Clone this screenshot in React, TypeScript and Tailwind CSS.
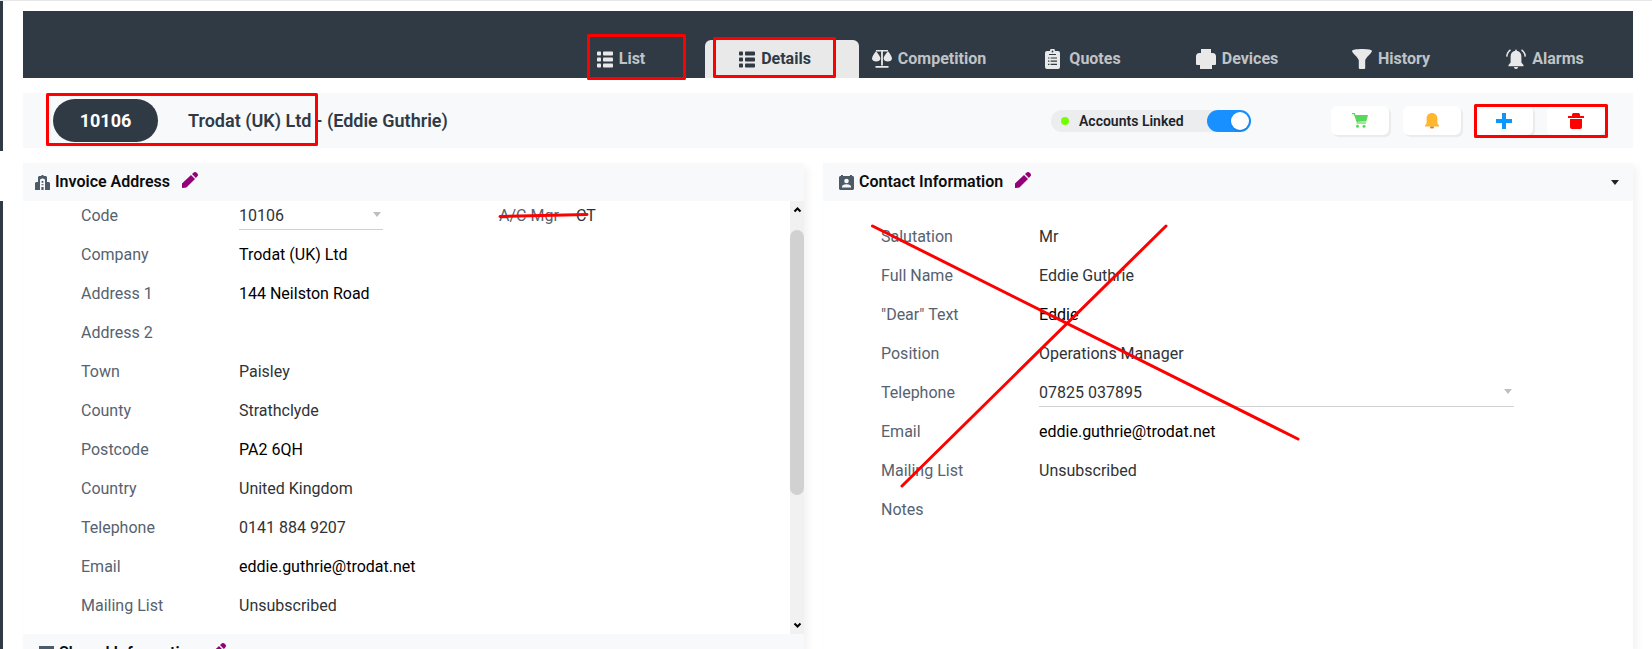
import React from "react";

type IconProps = { className?: string };

const ListIcon = ({ className }: IconProps) => (
  <svg viewBox="0 0 16 17" className={className} fill="currentColor">
    <rect x="0" y="0.500" width="4" height="4" rx="0.800" />
    <rect x="0" y="6.500" width="4" height="4" rx="0.800" />
    <rect x="0" y="12.500" width="4" height="4" rx="0.800" />
    <rect x="6" y="0.500" width="10" height="4" rx="0.800" />
    <rect x="6" y="6.500" width="10" height="4" rx="0.800" />
    <rect x="6" y="12.500" width="10" height="4" rx="0.800" />
  </svg>
);

const ScaleIcon = ({ className }: IconProps) => (
  <svg viewBox="0 0 20 18" className={className} fill="currentColor">
    <path d="M4 0h12v1.600H4zM9.100 1h1.800v14.500H9.100zM3.500 16h13v1.800h-13z" />
    <path d="M4 1.200C5.500 3 8.400 6 8.400 8.600 8.400 10.600 6.400 11.600 4.200 11.600S0 10.600 0 8.600C0 6 2.600 3 4 1.200zM16 1.200C17.400 3 20 6 20 8.600c0 2-2 3-4.200 3s-4.200-1-4.200-3C11.600 6 14.500 3 16 1.200z" />
  </svg>
);

const ClipboardIcon = ({ className }: IconProps) => (
  <svg viewBox="0 0 15 20" className={className}>
    <path fill="currentColor" d="M2 2h3a2.500 2.500 0 0 1 5 0h3a2 2 0 0 1 2 2v14a2 2 0 0 1-2 2H2a2 2 0 0 1-2-2V4a2 2 0 0 1 2-2z" />
    <circle cx="7.500" cy="2.500" r="0.900" fill="#303a45" />
    <path stroke="#303a45" strokeWidth="1.200" d="M4 5.500h7M3 9h1.400M5.600 9H12M3 12.200h1.400M5.600 12.200H12M3 15.400h1.400M5.600 15.400H12" />
  </svg>
);

const PrinterIcon = ({ className }: IconProps) => (
  <svg viewBox="0 0 20 20" className={className} fill="currentColor">
    <path d="M5 0h10v4h1.500A3.500 3.500 0 0 1 20 7.500V15a1 1 0 0 1-1 1h-3v4H4v-4H1a1 1 0 0 1-1-1V7.500A3.500 3.500 0 0 1 3.500 4H5z" />
  </svg>
);

const FunnelIcon = ({ className }: IconProps) => (
  <svg viewBox="0 0 20 20" className={className} fill="currentColor">
    <path d="M0 2C0 .7 4.500 0 10 0s10 .7 10 2c0 1.800-6.800 7-6.800 9.500V19a1 1 0 0 1-1 1H7.800a1 1 0 0 1-1-1v-7.500C6.800 9 0 3.800 0 2z" />
  </svg>
);

const RingingIcon = ({ className }: IconProps) => (
  <svg viewBox="0 0 20 20" className={className} fill="currentColor">
    <path d="M9.200 1.200a.8.8 0 0 1 1.600 0v.6C14 2.300 15.400 4.800 15.400 7.800V13.500l2.100 2.500v1.200h-15V16l2.100-2.500V7.800c0-3 1.400-5.500 4.600-6zM8 18h4a2 2 0 0 1-4 0z" />
    <path fill="none" stroke="currentColor" strokeWidth="1.500" d="M4.500.8C2.200 2.400.9 4.800.8 7.600M15.500.8c2.300 1.600 3.600 4 3.700 6.800" />
  </svg>
);

const CartIcon = ({ className }: IconProps) => (
  <svg viewBox="0 0 16 15" className={className}>
    <path fill="#58d858" d="M3.500 2H16l-1.600 6L5 9z" />
    <path fill="#9ee89a" d="M5 9l9.400-1-.6 3H5.600l-1.200 1z" />
    <path fill="none" stroke="#58d858" strokeWidth="1.300" d="M0 .7h2.400l3 8.500" />
    <circle cx="5.500" cy="13.300" r="1.500" fill="#58d858" />
    <circle cx="12" cy="13.300" r="1.500" fill="#58d858" />
  </svg>
);

const BellIcon = ({ className }: IconProps) => (
  <svg viewBox="0 0 14 16" className={className}>
    <path fill="#ffb72d" d="M7 0c3.400 0 5.400 2.400 5.400 5.600v4.600L14 12.400v1H0v-1l1.600-2.200V5.600C1.600 2.400 3.600 0 7 0z" />
    <path fill="#c98a2b" d="M4.800 13.400h4.400a2.200 2.200 0 0 1-4.400 0z" />
  </svg>
);

const PlusIcon = ({ className }: IconProps) => (
  <svg viewBox="0 0 16 16" className={className}>
    <path fill="#0a98ff" d="M6 0h4v6h6v4h-6v6H6v-6H0V6h6z" />
  </svg>
);

const TrashIcon = ({ className }: IconProps) => (
  <svg viewBox="0 0 16 16" className={className}>
    <path fill="#ff0000" d="M5.500 0h5A1.500 1.500 0 0 1 12 1.500V3h4v2H0V3h4V1.500A1.500 1.500 0 0 1 5.500 0zM2 6h12v8a2 2 0 0 1-2 2H4a2 2 0 0 1-2-2z" />
  </svg>
);

const PencilIcon = ({ className }: IconProps) => (
  <svg viewBox="0 0 16 16" className={className} fill="currentColor">
    <path d="M0 11.400L9 3l4 4-8.600 8.600L.6 16a.6.6 0 0 1-.6-.6zM10 2.100L11.700.6a2 2 0 0 1 2.700 0l1 1a2 2 0 0 1 0 2.700L13.900 6z" />
  </svg>
);

const BuildingIcon = ({ className }: IconProps) => (
  <svg viewBox="0 0 15 15" className={className}>
    <path fill="#4d5a68" d="M6.500 0h2v1H11l1 1v5h2l1 1v7H0V8l1-1h2V2l1-1h2.500z" />
    <path fill="#f8f9fb" d="M5 4.500l2.500-1.300L10 4.500V15H8.600v-3H6.400v3H5z" />
    <path fill="#4d5a68" d="M6.600 6h1.800v1.800H6.600zM6.400 9.300h2.200v1H6.400z" />
  </svg>
);

const ContactIcon = ({ className }: IconProps) => (
  <svg viewBox="0 0 15 15" className={className}>
    <path fill="#4d5a68" d="M2 0h2v1h7V0h2v1h1l1 1v12l-1 1H1l-1-1V2l1-1h1z" />
    <circle cx="7.500" cy="6" r="2.300" fill="#f8f9fb" />
    <path fill="#f8f9fb" d="M3 12.500v-1c0-1.500 3-2.300 4.500-2.300s4.500.8 4.500 2.300v1z" />
  </svg>
);

const BoxIcon = ({ className }: IconProps) => (
  <svg viewBox="0 0 15 15" className={className}>
    <rect width="15" height="15" fill="#4d5a68" />
  </svg>
);

const Caret = ({ className }: IconProps) => (
  <svg viewBox="0 0 8 5" className={className} fill="currentColor">
    <path d="M0 0h8L4 5z" />
  </svg>
);

const tabs = [
  { label: "List", Icon: ListIcon, size: "h-[17px] w-4" },
  { label: "Details", Icon: ListIcon, size: "h-[17px] w-4", active: true },
  { label: "Competition", Icon: ScaleIcon, size: "h-[18px] w-5" },
  { label: "Quotes", Icon: ClipboardIcon, size: "h-5 w-[15px] mr-[3px]" },
  { label: "Devices", Icon: PrinterIcon, size: "size-5" },
  { label: "History", Icon: FunnelIcon, size: "size-5" },
  { label: "Alarms", Icon: RingingIcon, size: "size-5" },
];

const actions = [
  { label: "Basket", icon: <CartIcon className="h-[15px] w-4" /> },
  { label: "Reminders", icon: <BellIcon className="h-4 w-[14px]" /> },
  { label: "Add", icon: <PlusIcon className="size-4" /> },
  { label: "Delete", icon: <TrashIcon className="size-4" /> },
];

type Field = { label: string; value?: string; strong?: boolean; select?: string; extra?: [string, string] };

const invoice: Field[] = [
  { label: "Code", value: "10106", select: "w-36", extra: ["A/C Mgr", "CT"] },
  { label: "Company", value: "Trodat (UK) Ltd", strong: true },
  { label: "Address 1", value: "144 Neilston Road", strong: true },
  { label: "Address 2" },
  { label: "Town", value: "Paisley" },
  { label: "County", value: "Strathclyde" },
  { label: "Postcode", value: "PA2 6QH", strong: true },
  { label: "Country", value: "United Kingdom" },
  { label: "Telephone", value: "0141 884 9207" },
  { label: "Email", value: "eddie.guthrie@trodat.net", strong: true },
  { label: "Mailing List", value: "Unsubscribed" },
];

const contact: Field[] = [
  { label: "Salutation", value: "Mr" },
  { label: "Full Name", value: "Eddie Guthrie" },
  { label: '"Dear" Text', value: "Eddie", strong: true },
  { label: "Position", value: "Operations Manager" },
  { label: "Telephone", value: "07825 037895", select: "mr-[119px] flex-1" },
  { label: "Email", value: "eddie.guthrie@trodat.net", strong: true },
  { label: "Mailing List", value: "Unsubscribed" },
  { label: "Notes" },
];

function FieldRow({ field, group }: { field: Field; group: string }) {
  const id = `${group}-${field.label}`;
  return (
    <div className="flex h-[39px] items-center pl-[58px]">
      {field.select ? (
        <>
          <label htmlFor={id} className="w-[158px] shrink-0 text-[#56626f]">{field.label}</label>
          <div className={`relative ${field.select}`}>
            <select id={id} className="h-7 w-full appearance-none border-b border-[#d0d0d0] bg-transparent pt-[2px] text-[#303336]">
              <option>{field.value}</option>
            </select>
            <Caret className="pointer-events-none absolute top-[10px] right-[2px] h-[5px] w-2 text-[#bfbfbf]" />
          </div>
        </>
      ) : (
        <>
          <span className="w-[158px] shrink-0 text-[#56626f]">{field.label}</span>
          <span className={field.strong ? "text-black" : "text-[#303336]"}>{field.value}</span>
        </>
      )}
      {field.extra && (
        <div className="ml-[116px] flex">
          <span className="w-[77px] text-[#56626f]">{field.extra[0]}</span>
          <span className="text-[#303336]">{field.extra[1]}</span>
        </div>
      )}
    </div>
  );
}

function CardHeader({ icon, title, children }: { icon: React.ReactNode; title: string; children?: React.ReactNode }) {
  return (
    <header className="flex h-[38px] shrink-0 items-center bg-[#f8f9fb] px-3">
      {icon}
      <h2 className="ml-[5px] text-base font-semibold text-[#0c0d0e]">{title}</h2>
      <button aria-label={`Edit ${title}`} className="mb-1 ml-3 text-[#940078]">
        <PencilIcon className="size-4" />
      </button>
      {children}
    </header>
  );
}

export default function App() {
  return (
    <div className="relative flex h-screen overflow-hidden border-t border-[#e8e8e8] bg-white font-['Roboto','Liberation_Sans',sans-serif] text-base leading-6">
      <aside className="flex w-[3px] shrink-0 flex-col">
        <div className="h-[150px] bg-[#303a45]" />
        <div className="mt-[50px] flex-1 bg-[#303a45]" />
      </aside>

      <main className="flex min-w-0 flex-1 flex-col gap-[15px] pt-[10px] pr-[19px] pl-5">
        <nav className="flex h-[67px] shrink-0 items-end justify-end bg-[#303a45] pr-1">
          {tabs.map(({ label, Icon, size, active }) => (
            <a
              key={label}
              href={`#${label.toLowerCase()}`}
              className={`flex h-[38px] w-[154px] items-center justify-center gap-[6px] rounded-t-md pr-[14px] text-base font-bold ${
                active ? "bg-[#e9e9e9] text-[#303a45]" : "text-[#c0c3c6]"
              }`}
            >
              <Icon className={`shrink-0 ${size} ${active ? "text-[#303a45]" : "text-[#e9e9e9]"}`} />
              {label}
            </a>
          ))}
        </nav>

        <section className="flex h-[55px] shrink-0 items-center bg-[#f8f9fb] pr-7 pl-[30px]">
          <span className="flex h-[43px] w-[105px] items-center justify-center rounded-full bg-[#303a45] text-lg font-bold text-white">10106</span>
          <h1 className="ml-[30px] text-lg font-semibold text-[#303a45]">Trodat (UK) Ltd - (Eddie Guthrie)</h1>

          <label className="ml-auto flex h-[22px] items-center rounded-full bg-[#ecedef] pl-[10px]">
            <span className="size-2 rounded-full bg-[#76ff03]" />
            <span className="ml-[10px] w-32 text-sm font-semibold text-[#202428]">Accounts Linked</span>
            <span className="relative flex">
              <input
                type="checkbox"
                defaultChecked
                className="h-[22px] w-11 appearance-none rounded-full bg-[#bfbfbf] checked:bg-[#1890ff]"
              />
              <span className="pointer-events-none absolute top-[2px] right-[2px] size-[18px] rounded-full bg-white shadow-sm" />
            </span>
          </label>

          <div className="ml-20 flex gap-[14px]">
            {actions.map(({ label, icon }) => (
              <button
                key={label}
                aria-label={label}
                className="flex h-[29px] w-[58px] items-center justify-center rounded-md bg-white shadow-[2px_2px_1px_rgba(0,0,0,0.06)]"
              >
                {icon}
              </button>
            ))}
          </div>
        </section>

        <div className="flex min-h-0 flex-1 gap-[19px]">
          <div className="flex min-w-0 flex-[781] flex-col shadow-[4px_4px_8px_rgba(0,0,0,0.05)]">
            <CardHeader icon={<BuildingIcon className="size-[15px]" />} title="Invoice Address" />
            <div className="flex h-[433px] shrink-0 overflow-hidden">
              <div className="-mt-[5px] min-w-0 flex-1">
                {invoice.map((field) => (
                  <FieldRow key={field.label} field={field} group="invoice" />
                ))}
              </div>
              <div className="flex w-[14px] shrink-0 flex-col items-center bg-[#f1f1f1]">
                <svg viewBox="0 0 14 17" className="h-[17px] w-[14px] shrink-0" fill="none" stroke="#000" strokeWidth="2">
                  <path d="M4.500 10.500l3-3 3 3" />
                </svg>
                <div className="mt-3 h-[265px] w-full rounded-full bg-[#d1d1d1]" />
                <svg viewBox="0 0 14 17" className="mt-auto h-[17px] w-[14px] shrink-0" fill="none" stroke="#000" strokeWidth="2">
                  <path d="M4.500 6.500l3 3 3-3" />
                </svg>
              </div>
            </div>
            <div className="shrink-0 bg-[#f8f9fb] pl-1">
              <CardHeader icon={<BoxIcon className="size-[15px]" />} title="Shared Information" />
            </div>
          </div>

          <div className="min-w-0 flex-[810] shadow-[4px_4px_8px_rgba(0,0,0,0.05)]">
            <div className="bg-[#f8f9fb] pl-1">
              <CardHeader icon={<ContactIcon className="size-[15px]" />} title="Contact Information">
                <button aria-label="Collapse" className="ml-auto pr-[2px] text-[#202428]">
                  <Caret className="h-[5px] w-2" />
                </button>
              </CardHeader>
            </div>
            <div className="pt-4">
              {contact.map((field) => (
                <FieldRow key={field.label} field={field} group="contact" />
              ))}
            </div>
          </div>
        </div>
      </main>

      <svg
        className="pointer-events-none absolute -top-px left-0 h-[649px] w-[1652px]"
        viewBox="0 0 1652 649"
        fill="none"
        stroke="#ff0000"
        strokeWidth="3"
        strokeLinecap="round"
        strokeLinejoin="round"
      >
        <rect x="588.500" y="35.500" width="96" height="43" />
        <rect x="714.500" y="38.500" width="120" height="38" />
        <rect x="47.500" y="94.500" width="269" height="50" />
        <rect x="1475.500" y="105.500" width="131" height="31" />
        <path d="M500 216.500L587 214.500M872.500 226L1298 439M1166 226L902 486" />
      </svg>
    </div>
  );
}
